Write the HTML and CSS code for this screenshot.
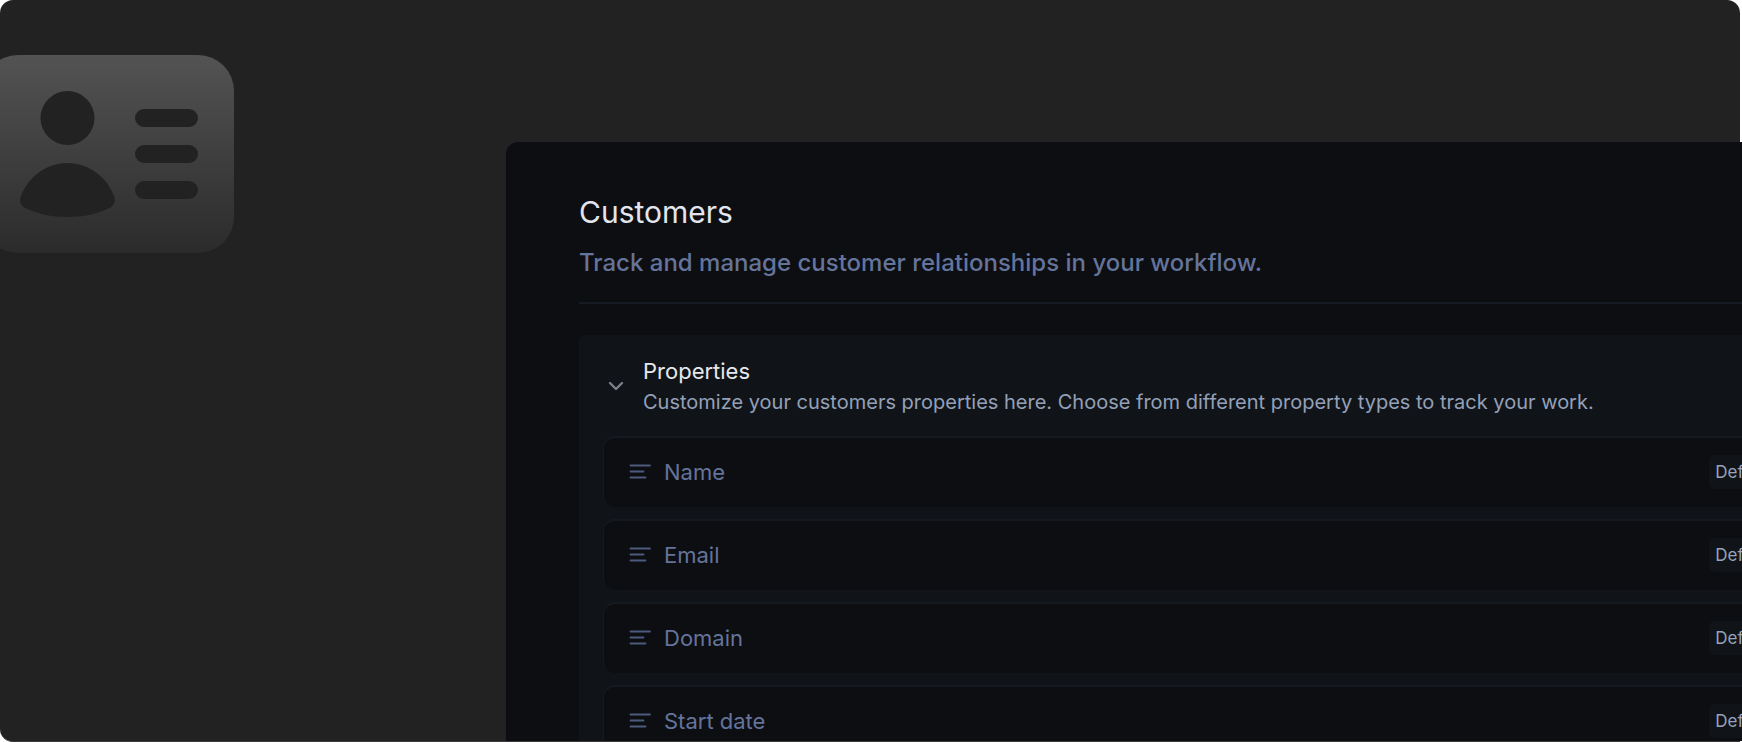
FILE: index.html
```html
<!DOCTYPE html>
<html lang="en">
<head>
<meta charset="utf-8">
<title>Customers</title>
<link rel="stylesheet" href="styles.css">
</head>
<body>
<svg class="sprite" aria-hidden="true">
  <symbol id="lines" viewBox="0 0 22 16">
    <path d="M1.500 1.5H21M1.500 7.5H14.500M1.500 13.5H16.500" fill="none" stroke="currentColor" stroke-width="1.8" stroke-linecap="round"/>
  </symbol>
</svg>
<div class="frame">
  <svg class="emblem" viewBox="0 0 252 198" role="img" aria-label="Contact card">
    <defs>
      <linearGradient id="fade" x1="0" y1="0" x2="0" y2="1">
        <stop offset="0" stop-color="#535353"/>
        <stop offset="1" stop-color="#2b2b2b"/>
      </linearGradient>
    </defs>
    <rect width="252" height="198" rx="36" fill="url(#fade)"/>
    <g fill="#222">
      <circle cx="85.5" cy="63" r="27"/>
      <path d="M85.500 108C106.500 108 125 122 132 141C134 146 132.500 150 128.500 152.500C115.500 159 102 162 85.500 162C69 162 55.500 159 42.500 152.500C38.500 150 37 146 39 141C46 122 64.500 108 85.500 108Z"/>
      <rect x="153" y="54" width="63" height="18" rx="9"/>
      <rect x="153" y="90" width="63" height="18" rx="9"/>
      <rect x="153" y="126" width="63" height="18" rx="9"/>
    </g>
  </svg>
  <main class="panel">
    <header class="intro">
      <h1 class="title">Customers</h1>
      <p class="subtitle">Track and manage customer relationships in your workflow.</p>
    </header>
    <section class="section">
      <div class="section-head">
        <button class="toggle" type="button" aria-label="Collapse properties" aria-expanded="true">
          <svg class="chevron" viewBox="0 0 16 10"><path d="M2 2L8 8L14 2" fill="none" stroke="currentColor" stroke-width="2.4" stroke-linecap="round" stroke-linejoin="round"/></svg>
        </button>
        <div>
          <h2 class="section-title">Properties</h2>
          <p class="section-text">Customize your customers properties here. Choose from different property types to track your work.</p>
        </div>
      </div>
      <ul class="rows">
        <li class="row"><svg class="row-icon"><use href="#lines"/></svg><span class="name">Name</span><span class="tag">Default</span></li>
        <li class="row"><svg class="row-icon"><use href="#lines"/></svg><span class="name">Email</span><span class="tag">Default</span></li>
        <li class="row"><svg class="row-icon"><use href="#lines"/></svg><span class="name">Domain</span><span class="tag">Default</span></li>
        <li class="row"><svg class="row-icon"><use href="#lines"/></svg><span class="name">Start date</span><span class="tag">Default</span></li>
      </ul>
    </section>
  </main>
</div>
</body>
</html>
```
FILE: styles.css
```css
* { box-sizing: border-box; }

body {
  margin: 0;
  background: #fff;
  font-family: Inter, "Liberation Sans", sans-serif;
  overflow: hidden;
}

h1, h2, p, ul { margin: 0; padding: 0; }

.sprite { display: none; }

.frame {
  display: flex;
  align-items: flex-start;
  height: 100vh;
  margin-right: 2px;
  background: #222;
  border-bottom: 1px solid #3a3a3a;
  border-radius: 13px 13px 0 13px;
  overflow-x: visible;
  overflow-y: clip;
}

.emblem {
  flex: none;
  width: 252px;
  height: 198px;
  margin: 55px 272px 0 -18px;
}

.panel {
  flex: 1;
  min-width: 0;
  margin: 142px -2px 0 0;
  padding: 50px 0 0 73px;
  background: #0d0e12;
  border-radius: 12px 0 0 0;
  overflow: clip;
}

.intro {
  padding-bottom: 23px;
  border-bottom: 2px solid #151a23;
}

.title {
  color: #e2e5ee;
  font-size: 30px;
  font-weight: 400;
  line-height: 40px;
}

.subtitle {
  margin-top: 15px;
  color: #64749b;
  font-size: 24px;
  font-weight: 500;
  line-height: 32px;
}

.section {
  margin: 31px -90px 0 0;
  padding: 20px 24px 24px;
  background: #101418;
  border-radius: 6px 0 0 0;
}

.section-head {
  display: flex;
  align-items: center;
  gap: 15px;
}

.toggle {
  display: flex;
  align-items: center;
  justify-content: center;
  width: 25px;
  height: 24px;
  padding: 0;
  border: 0;
  background: none;
  color: #7d8088;
}

.chevron { width: 16px; height: 10px; }

.section-title {
  color: #e6e8ec;
  font-size: 22px;
  font-weight: 400;
  line-height: 32px;
}

.section-text {
  color: #94a0b8;
  font-size: 20px;
  font-weight: 400;
  line-height: 30px;
  white-space: nowrap;
}

.rows {
  display: grid;
  gap: 12px;
  margin-top: 19px;
  list-style: none;
}

.row {
  display: flex;
  align-items: center;
  height: 71px;
  padding: 0 28px 2px 25px;
  background: #0d0e12;
  border: 1px solid #151a21;
  border-width: 2px 1px 0;
  border-radius: 12px;
}

.row-icon {
  width: 22px;
  height: 16px;
  color: #4d5a7c;
}

.name {
  margin-left: 13px;
  color: #64749b;
  font-size: 22px;
  font-weight: 400;
  line-height: 32px;
}

.tag {
  margin-left: auto;
  padding: 0 6px;
  background: #101418;
  border-radius: 6px;
  color: #97a3bd;
  font-size: 17px;
  font-weight: 400;
  line-height: 34px;
}
```
